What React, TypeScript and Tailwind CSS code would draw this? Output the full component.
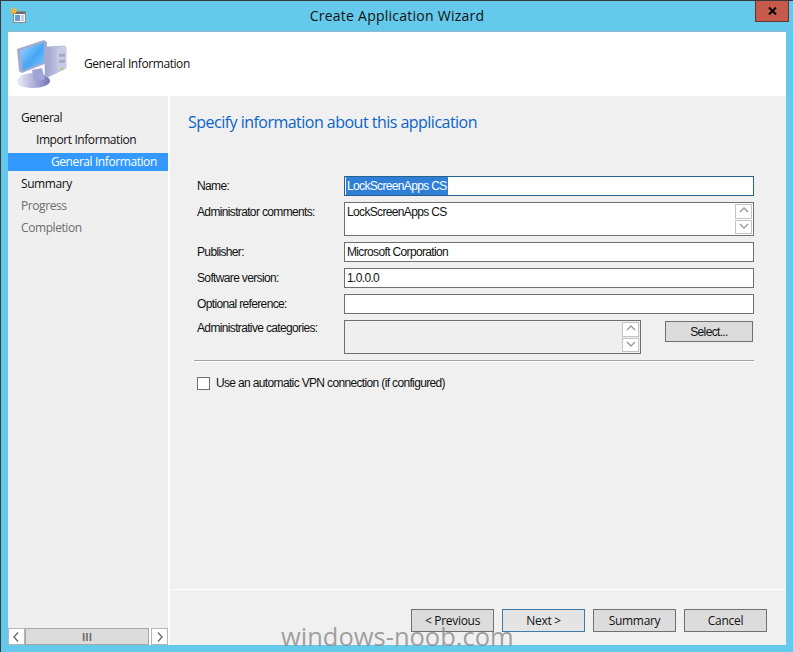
const UI_FONT = "font-['Open_Sans','Noto_Sans',sans-serif]"
const FORM_FONT = "font-['Liberation_Sans',Arial,sans-serif] text-[12px] tracking-[-0.65px]"

function ComputerIcon() {
  return (
    <svg width="50" height="48" viewBox="0 0 50 48" className="block">
      <defs>
        <linearGradient id="screen" x1="0" y1="0" x2="1" y2="1">
          <stop offset="0" stopColor="#a9d8fb" />
          <stop offset="0.55" stopColor="#45a6f6" />
          <stop offset="1" stopColor="#86c6f8" />
        </linearGradient>
        <linearGradient id="tower" x1="0" y1="0" x2="1" y2="0">
          <stop offset="0" stopColor="#9da3cc" />
          <stop offset="1" stopColor="#d6d9ec" />
        </linearGradient>
        <linearGradient id="base" x1="0" y1="0" x2="1" y2="0">
          <stop offset="0" stopColor="#eeeff8" />
          <stop offset="1" stopColor="#7073b8" />
        </linearGradient>
      </defs>
      <path d="M28 7l20-1 1 2v20l-18 9-3-2z" fill="url(#tower)" stroke="#a2a6cb" strokeWidth="0.6" />
      <path d="M40 9l9-.5v20l-9 4z" fill="#c7cae2" />
      <path d="M42 14l6-.5v3l-6 .5zM42 20l6-.5v3l-6 .5z" fill="#a3a8cd" />
      <circle cx="45" cy="29" r="1.2" fill="#9ed65c" />
      <path d="M0 41c0-4 7-8 16-8s17 4 17 8-8 7-17 7S0 46 0 41z" fill="url(#base)" />
      <path d="M15 30l10-2 3 11c-3 2-8 2-11 1z" fill="#a0a4d6" />
      <path d="M0 9l27-9 3 2 0 21-25 10-3-2z" fill="#a5aacf" />
      <path d="M3 10.500l24-8v19.500L6 30.500z" fill="url(#screen)" />
    </svg>
  )
}

function TitleIcon() {
  return (
    <svg width="16" height="16" viewBox="0 0 16 16" className="block">
      <rect x="3.500" y="4.500" width="12" height="11" fill="#f4f4f4" stroke="#8a8a8a" strokeWidth="1" />
      <rect x="4" y="5" width="11" height="2" fill="#6d6d6d" />
      <rect x="5" y="8" width="5" height="6" fill="#6b9ad6" />
      <rect x="11" y="8" width="3" height="6" fill="#c9cdd6" />
      <circle cx="4" cy="4" r="2.600" fill="#f7b733" />
      <path d="M4 0v1.500M0 4h1.500M1 1l1 1M7 1L6 2M1 7l1-1" stroke="#f7b733" strokeWidth="1" />
    </svg>
  )
}

function Chevron({ dir, dark }: { dir: 'up' | 'down' | 'left' | 'right'; dark?: boolean }) {
  const d = {
    up: 'M1 6l4-4 4 4',
    down: 'M1 2l4 4 4-4',
    left: 'M6 0.5L2 5l4 4.5',
    right: 'M3 0.5L7 5l-4 4.5',
  }[dir]
  return (
    <svg width="10" height="10" viewBox="0 0 10 10" className="block">
      <path d={d} fill="none" stroke={dark ? '#6d6d6d' : '#9a9a9a'} strokeWidth="1.4" />
    </svg>
  )
}

function Spinner() {
  return (
    <div className="flex flex-col w-[17px] h-[30px] gap-px">
      <div className="flex-1 flex items-center justify-center border border-[#c3c3c3] bg-white">
        <Chevron dir="up" />
      </div>
      <div className="flex-1 flex items-center justify-center border border-[#c3c3c3] bg-white">
        <Chevron dir="down" />
      </div>
    </div>
  )
}

function Label({ children, className = '' }: { children: string; className?: string }) {
  return <div className={`w-[147px] shrink-0 leading-[16px] text-[#111] ${FORM_FONT} ${className}`}>{children}</div>
}

function Field({ label, value }: { label: string; value?: string }) {
  return (
    <div className="flex items-center h-[20px] mt-[6px]">
      <Label>{label}</Label>
      <div className={`flex-1 h-[20px] border border-[#6f6f6f] bg-white pl-[2px] leading-[18px] text-[#111] ${FORM_FONT}`}>
        {value}
      </div>
    </div>
  )
}

function WizardButton({ children, focused }: { children: string; focused?: boolean }) {
  return (
    <button
      className={`w-[83px] h-[23px] border text-[12px] leading-[20px] tracking-[-0.3px] text-[#111] ${
        focused ? 'border-[#3d7bad] bg-[#e4e4e4]' : 'border-[#707070] bg-[#dcdcdc]'
      }`}
    >
      {children}
    </button>
  )
}

function NavItem({
  label,
  indent,
  selected,
  muted,
}: {
  label: string
  indent: string
  selected?: boolean
  muted?: boolean
}) {
  return (
    <div
      className={`h-[18px] mb-[4px] text-[12px] leading-[17px] tracking-[-0.42px] ${indent} ${
        selected ? 'bg-[#3399ff] text-white' : muted ? 'text-[#6d6d6d]' : 'text-[#111]'
      }`}
    >
      {label}
    </div>
  )
}

export default function App() {
  return (
    <div className={`relative w-[793px] h-[652px] overflow-hidden bg-[#65c9ec] border-t border-l border-[#3a3a3a] pl-[7px] pr-[7px] flex flex-col ${UI_FONT}`}>
      {/* Title bar */}
      <div className="h-[30px] shrink-0 grid grid-cols-[1fr_auto_1fr] items-start">
        <div className="pl-[2px] pt-[6px]">
          <TitleIcon />
        </div>
        <div className="pt-[6px] text-[14px] leading-[18px] tracking-[0.25px] text-[#111]">Create Application Wizard</div>
        <div className="flex justify-end mr-[-3px]">
          <div className="w-[34px] h-[21px] bg-[#c75b4b] border border-t-0 border-[#5a3a36] flex items-center justify-center">
            <svg width="9" height="8" viewBox="0 0 9 8" className="block">
              <path d="M1 0.5l7 7M8 0.5l-7 7" fill="none" stroke="#000" strokeWidth="2" />
            </svg>
          </div>
        </div>
      </div>

      {/* Header */}
      <div className="h-[65px] shrink-0 bg-white flex items-center border-t border-[#8fb8cc]">
        <div className="ml-[9px] mt-[-1px]">
          <ComputerIcon />
        </div>
        <div className="ml-[17px] text-[12px] tracking-[-0.42px] text-[#111]">General Information</div>
      </div>

      <div className="flex-1 flex min-h-0 mb-[7px] bg-white">
        {/* Sidebar */}
        <div className="w-[160px] shrink-0 bg-[#efefef] flex flex-col justify-between">
          <div className="pt-[13px]">
            <NavItem label="General" indent="pl-[13px]" />
            <NavItem label="Import Information" indent="pl-[28px]" />
            <NavItem label="General Information" indent="pl-[43px]" selected />
            <NavItem label="Summary" indent="pl-[13px]" />
            <NavItem label="Progress" indent="pl-[13px]" muted />
            <NavItem label="Completion" indent="pl-[13px]" muted />
          </div>
          <div className="h-[17px] flex bg-white">
            <div className="w-[17px] border border-[#b5b5b5] flex items-center justify-center">
              <Chevron dir="left" dark />
            </div>
            <div className="w-[124px] bg-[#dcdcdc] border border-[#a6a6a6] flex items-center justify-center text-[10px] font-bold leading-none text-[#666]">
              III
            </div>
            <div className="w-[2px]" />
            <div className="w-[17px] border border-[#b5b5b5] flex items-center justify-center">
              <Chevron dir="right" dark />
            </div>
          </div>
        </div>

        {/* Main */}
        <div className="flex-1 ml-[2px] flex flex-col bg-[#f0f0f0]">
          <div className="flex-1 border-b border-white pt-[15px] pl-[18px] pr-[32px]">
            <h1 className="text-[16px] leading-[22px] tracking-[-0.52px] text-[#0a64c8]">
              Specify information about this application
            </h1>

            <div className="mt-[43px] pl-[9px]">
              <div className="flex items-center h-[20px] mt-[6px]">
                <Label>Name:</Label>
                <div className={`flex-1 h-[20px] border border-[#26648f] bg-white pl-[1px] leading-[18px] ${FORM_FONT}`}>
                  <span className="inline-block px-[1px] bg-[#2f7fd6] text-white">LockScreenApps CS</span>
                </div>
              </div>

              <div className="flex items-start h-[34px] mt-[6px]">
                <Label className="mt-[2px]">Administrator comments:</Label>
                <div className={`flex-1 h-[34px] border border-[#6f6f6f] bg-white pl-[2px] pr-[1px] flex justify-between leading-[16px] text-[#111] ${FORM_FONT}`}>
                  <span className="pt-[1px]">LockScreenApps CS</span>
                  <div className="py-px">
                    <Spinner />
                  </div>
                </div>
              </div>

              <Field label="Publisher:" value="Microsoft Corporation" />
              <Field label="Software version:" value="1.0.0.0" />
              <Field label="Optional reference:" />

              <div className="flex items-start h-[34px] mt-[6px]">
                <Label>Administrative categories:</Label>
                <div className="w-[297px] h-[34px] border border-[#6f6f6f] bg-[#efefef] pr-[1px] py-px flex justify-end">
                  <Spinner />
                </div>
                <button className={`ml-[24px] mt-px w-[88px] h-[21px] border border-[#707070] bg-[#dcdcdc] leading-[18px] text-[#111] ${FORM_FONT}`}>
                  Select...
                </button>
              </div>
            </div>

            <div className="mt-[6px] ml-[6px] h-px bg-[#a3a3a3] border-b border-white box-content" />

            <label className={`mt-[13px] ml-[9px] flex items-center gap-[6px] leading-[16px] text-[#111] ${FORM_FONT}`}>
              <span className="w-[13px] h-[13px] border border-[#6f6f6f] bg-white" />
              Use an automatic VPN connection (if configured)
            </label>
          </div>

          {/* Footer buttons */}
          <div className="h-[55px] shrink-0 flex justify-end gap-[8px] pt-[19px] pr-[19px]">
            <WizardButton>&lt; Previous</WizardButton>
            <WizardButton focused>Next &gt;</WizardButton>
            <WizardButton>Summary</WizardButton>
            <WizardButton>Cancel</WizardButton>
          </div>
        </div>
      </div>

      {/* Watermark */}
      <div className="absolute left-[280px] top-[621px] text-[25.500px] leading-[28px] text-[#8a8a8a]/80">
        windows-noob.com
      </div>
    </div>
  )
}
